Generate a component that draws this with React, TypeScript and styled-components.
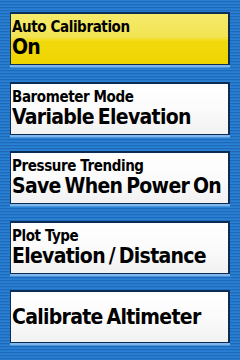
import React from "react";
import styled, { createGlobalStyle } from "styled-components";

const Global = createGlobalStyle`
  html, body { margin: 0; padding: 0; }
  body { width: 240px; height: 360px; overflow: hidden; }
`;

const Screen = styled.div`
  width: 240px;
  height: 360px;
  box-sizing: border-box;
  padding: 12px 10px 0 10px;
  display: flex;
  flex-direction: column;
  gap: 16.5px;
  background-color: #2477c9;
  background-image: repeating-linear-gradient(
    to bottom,
    #2a80d2 0px,
    #2a80d2 1px,
    #1d69ba 1px,
    #1d69ba 2px,
    #2679cb 2px,
    #2679cb 3px
  );
  font-family: "DejaVu Sans Condensed", "DejaVu Sans", sans-serif;
`;

const Card = styled.div<{ $active?: boolean }>`
  height: 53px;
  flex: none;
  box-sizing: border-box;
  border: 1px solid #0b2d55;
  border-top-width: 2px;
  border-right-width: 2px;
  background: ${(p) =>
    p.$active
      ? "linear-gradient(to bottom, #f5ea6a 0%, #f3e455 45%, #f1d90c 55%, #efd400 100%)"
      : "linear-gradient(to bottom, #ffffff 0%, #fbfbfb 50%, #f1f1f1 100%)"};
  box-shadow: 0 2px 0 #7fb7ec, 0 3px 0 #4a94dc;
  padding: 5px 0 0 1px;
  display: flex;
  flex-direction: column;
  color: #000;
`;

const SingleCard = styled(Card)`
  padding: 0 0 0 1px;
  justify-content: center;
`;

const Label = styled.div`
  font-size: 15px;
  font-weight: bold;
  line-height: 16px;
  letter-spacing: -0.4px;
  white-space: nowrap;
`;

const Value = styled.div`
  font-size: 21px;
  font-weight: bold;
  line-height: 23px;
  margin-top: 1px;
  letter-spacing: -0.7px;
  word-spacing: -2px;
  white-space: nowrap;
`;

const items = [
  { label: "Auto Calibration", value: "On", active: true },
  { label: "Barometer Mode", value: "Variable Elevation" },
  { label: "Pressure Trending", value: "Save When Power On" },
  { label: "Plot Type", value: "Elevation / Distance" },
];

export default function App() {
  return (
    <>
      <Global />
      <Screen>
        {items.map((it) => (
          <Card key={it.label} $active={it.active}>
            <Label>{it.label}</Label>
            <Value>{it.value}</Value>
          </Card>
        ))}
        <SingleCard>
          <Value>Calibrate Altimeter</Value>
        </SingleCard>
      </Screen>
    </>
  );
}
